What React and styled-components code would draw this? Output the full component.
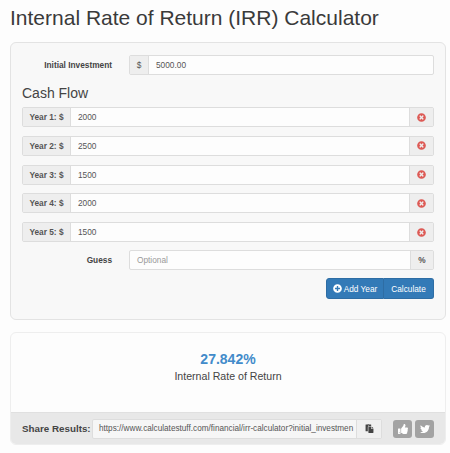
import styled, { createGlobalStyle } from "styled-components"
import { FaTimesCircle, FaPlusCircle, FaPaste, FaThumbsUp, FaTwitter } from "react-icons/fa"

const years = [
  { label: "Year 1: $", value: "2000" },
  { label: "Year 2: $", value: "2500" },
  { label: "Year 3: $", value: "1500" },
  { label: "Year 4: $", value: "2000" },
  { label: "Year 5: $", value: "1500" },
]

export default function App() {
  return (
    <Page>
      <GlobalStyle />
      <Title>Internal Rate of Return (IRR) Calculator</Title>

      <FormPanel>
        <LabelRow>
          <RowLabel>Initial Investment</RowLabel>
          <InputGroup>
            <Addon $width={19}>$</Addon>
            <Field>5000.00</Field>
          </InputGroup>
        </LabelRow>

        <SectionTitle>Cash Flow</SectionTitle>

        <YearList>
          {years.map((year) => (
            <InputGroup key={year.label}>
              <Addon $width={48} $bold>{year.label}</Addon>
              <Field>{year.value}</Field>
              <Addon $width={24} $right>
                <FaTimesCircle color="#dd5a55" size={9} />
              </Addon>
            </InputGroup>
          ))}
        </YearList>

        <LabelRow $top={8}>
          <RowLabel>Guess</RowLabel>
          <InputGroup>
            <Field $muted>Optional</Field>
            <Addon $width={23} $right $bold>%</Addon>
          </InputGroup>
        </LabelRow>

        <Actions>
          <ActionButton $first>
            <FaPlusCircle size={9} />
            Add Year
          </ActionButton>
          <ActionButton>Calculate</ActionButton>
        </Actions>
      </FormPanel>

      <ResultPanel>
        <ResultBody>
          <ResultValue>27.842%</ResultValue>
          <ResultLabel>Internal Rate of Return</ResultLabel>
        </ResultBody>
        <ShareBar>
          <ShareLabel>Share Results:</ShareLabel>
          <ShareGroup>
            <ShareUrl>https://www.calculatestuff.com/financial/irr-calculator?initial_investmen</ShareUrl>
            <CopyButton><FaPaste size={9} /></CopyButton>
          </ShareGroup>
          <SocialButtons>
            <SocialButton><FaThumbsUp size={10} /></SocialButton>
            <SocialButton><FaTwitter size={10} /></SocialButton>
          </SocialButtons>
        </ShareBar>
      </ResultPanel>
    </Page>
  )
}

const GlobalStyle = createGlobalStyle`
html, body {
  margin: 0;
  background: #fdfdfd;
}
* {
  box-sizing: border-box;
}
`

const Page = styled.div`
width: 450px;
height: 453px;
padding: 0 4px 0 10px;
overflow: hidden;
font-family: "Liberation Sans", Arial, sans-serif;
color: #333;
`

const Title = styled.h1`
margin: 0;
padding-top: 5px;
height: 42px;
font-size: 21px;
line-height: 26px;
font-weight: 400;
color: #3a3a3a;
white-space: nowrap;
`

const FormPanel = styled.div`
height: 278px;
padding: 12px 11px 0 11px;
background: #f8f8f8;
border: 1px solid #e3e3e3;
border-radius: 6px;
`

const LabelRow = styled.div`
display: flex;
align-items: center;
margin-top: ${(p) => p.$top || 0}px;
`

const RowLabel = styled.div`
width: 107px;
padding-right: 17px;
flex-shrink: 0;
text-align: right;
font-size: 8.3px;
font-weight: 700;
color: #444;
`

const InputGroup = styled.div`
flex-grow: 1;
display: flex;
height: 20px;
flex-shrink: 0;
font-size: 8.3px;
background: #fdfdfd;
border: 1px solid #ddd;
border-radius: 2px;
`

const Addon = styled.div`
width: ${(p) => p.$width}px;
flex-shrink: 0;
display: flex;
align-items: center;
justify-content: center;
background: #eeeeee;
color: #555;
font-weight: ${(p) => (p.$bold ? 700 : 400)};
border-right: ${(p) => (p.$right ? "none" : "1px solid #ddd")};
border-left: ${(p) => (p.$right ? "1px solid #ddd" : "none")};
`

const Field = styled.div`
flex: 1;
display: flex;
align-items: center;
padding-left: 7px;
color: ${(p) => (p.$muted ? "#999" : "#555")};
`

const SectionTitle = styled.h3`
margin: 0;
height: 32px;
padding-top: 10px;
font-size: 14px;
line-height: 16px;
font-weight: 400;
color: #444;
`

const YearList = styled.div`
display: flex;
flex-direction: column;
gap: 8.75px;
`

const Actions = styled.div`
display: flex;
justify-content: flex-end;
margin-top: 8px;
`

const ActionButton = styled.div`
height: 21px;
display: flex;
align-items: center;
justify-content: center;
gap: 2px;
width: ${(p) => (p.$first ? 58 : 50)}px;
font-size: 8.3px;
white-space: nowrap;
color: #fff;
background: #337ab7;
border: 1px solid #2e6da4;
border-left: ${(p) => (p.$first ? "1px solid #2e6da4" : "none")};
border-radius: ${(p) => (p.$first ? "3px 0 0 3px" : "0 3px 3px 0")};
`

const ResultPanel = styled.div`
margin-top: 12px;
height: 113px;
display: flex;
flex-direction: column;
background: #fdfdfd;
border: 1px solid #eee;
border-radius: 6px;
overflow: hidden;
`

const ResultBody = styled.div`
flex: 1;
display: flex;
flex-direction: column;
align-items: center;
padding-top: 18px;
`

const ResultValue = styled.div`
font-size: 14px;
line-height: 16px;
font-weight: 700;
color: #428bca;
`

const ResultLabel = styled.div`
margin-top: 3px;
font-size: 10.6px;
line-height: 13px;
color: #444;
`

const ShareBar = styled.div`
height: 32px;
display: flex;
align-items: center;
padding: 0 11px;
background: #e8e8e8;
border-top: 1px solid #e0e0e0;
`

const ShareLabel = styled.div`
width: 70px;
flex-shrink: 0;
font-size: 9.8px;
font-weight: 700;
white-space: nowrap;
color: #444;
`

const ShareGroup = styled.div`
width: 290px;
height: 20px;
flex-shrink: 0;
display: flex;
background: #f6f6f6;
border: 1px solid #ddd;
border-radius: 2px;
`

const ShareUrl = styled.div`
flex: 1;
min-width: 0;
padding: 0 0 0 6px;
overflow: hidden;
white-space: nowrap;
font-size: 8.2px;
line-height: 18px;
color: #555;
`

const CopyButton = styled.div`
width: 25px;
flex-shrink: 0;
display: flex;
align-items: center;
justify-content: center;
color: #444;
background: #f0f0f0;
border-left: 1px solid #ddd;
`

const SocialButtons = styled.div`
display: flex;
gap: 3px;
margin-left: 11px;
`

const SocialButton = styled.div`
width: 19px;
height: 18px;
display: flex;
align-items: center;
justify-content: center;
color: #fff;
background: #a3a3a3;
border-radius: 3px;
`
